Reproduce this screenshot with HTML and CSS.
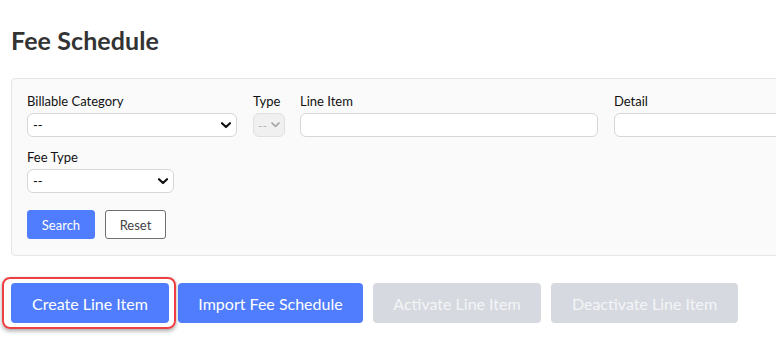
FILE: index.html
```html
<!DOCTYPE html>
<html>
<head>
<meta charset="utf-8">
<link rel="stylesheet" href="styles.css">
</head>
<body>
<div class="page">
  <h1 class="title">Fee Schedule</h1>
  <div class="panel">
    <div class="row">
      <div class="field f-cat">
        <label class="lbl">Billable Category</label>
        <div class="select"><span>--</span><svg class="chev" viewBox="0 0 10 7" width="10" height="7"><path d="M1 1.2 L5 5 L9 1.2" fill="none" stroke="#111" stroke-width="2.2" stroke-linecap="round" stroke-linejoin="round"/></svg></div>
      </div>
      <div class="field f-type">
        <label class="lbl">Type</label>
        <div class="select disabled"><span>--</span><svg class="chev" viewBox="0 0 10 7" width="9" height="6"><path d="M1 1.2 L5 5 L9 1.2" fill="none" stroke="#a6a6a6" stroke-width="2" stroke-linecap="round" stroke-linejoin="round"/></svg></div>
      </div>
      <div class="field f-line">
        <label class="lbl">Line Item</label>
        <div class="input"></div>
      </div>
      <div class="field f-detail">
        <label class="lbl">Detail</label>
        <div class="input"></div>
      </div>
    </div>
    <div class="row row2">
      <div class="field f-fee">
        <label class="lbl">Fee Type</label>
        <div class="select"><span>--</span><svg class="chev" viewBox="0 0 10 7" width="10" height="7"><path d="M1 1.2 L5 5 L9 1.2" fill="none" stroke="#111" stroke-width="2.2" stroke-linecap="round" stroke-linejoin="round"/></svg></div>
      </div>
    </div>
    <div class="actions">
      <button class="btn-search">Search</button>
      <button class="btn-reset">Reset</button>
    </div>
  </div>
  <div class="toolbar">
    <button class="big primary">Create Line Item</button>
    <button class="big primary imp">Import Fee Schedule</button>
    <button class="big off act">Activate Line Item</button>
    <button class="big off deact">Deactivate Line Item</button>
    <div class="highlight"></div>
  </div>
</div>
</body>
</html>
```
FILE: styles.css
```css
html, body {
  margin: 0;
  padding: 0;
  background: #fff;
  overflow: hidden;
}
body {
  font-family: Lato, "Liberation Sans", sans-serif;
  color: #222;
  width: 776px;
  height: 350px;
}
.page {
  padding-left: 11px;
}
.title {
  margin: 0;
  padding-top: 26px;
  font-size: 25px;
  line-height: 28px;
  font-weight: 700;
  color: #333;
  letter-spacing: 0.1px;
}
.panel {
  margin-top: 24px;
  width: 1000px;
  box-sizing: border-box;
  background: #fafafa;
  border: 1px solid #e6e6e6;
  border-radius: 4px;
  padding: 13px 15px 16px 15px;
}
.row {
  display: flex;
}
.row2 {
  margin-top: 11px;
}
.field {
  display: flex;
  flex-direction: column;
  flex-shrink: 0;
}
.lbl {
  font-size: 13px;
  line-height: 18px;
  color: #111;
  margin-bottom: 3px;
}
.f-cat { width: 210px; margin-right: 16px; }
.f-type { width: 32px; margin-right: 15px; }
.f-line { width: 298px; margin-right: 16px; }
.f-detail { width: 298px; }
.f-fee { width: 147px; }
.select, .input {
  box-sizing: border-box;
  height: 24px;
  border: 1px solid #d6d6d6;
  border-radius: 6px;
  background: #fff;
  display: flex;
  align-items: center;
  justify-content: space-between;
  padding: 0 4px 0 5px;
  font-size: 13px;
  color: #111;
}
.select span {
  line-height: 1;
  margin-top: 1px;
}
.chev {
  display: block;
  margin-right: 1px;
}
.select.disabled {
  background: #f0f0f0;
  border-color: #e0e0e0;
  color: #b0b0b0;
  padding: 0 3px 0 4px;
  font-size: 12px;
}
.actions {
  display: flex;
  gap: 10px;
  margin-top: 17px;
}
.actions button {
  box-sizing: border-box;
  height: 29px;
  font-family: Lato, "Liberation Sans", sans-serif;
  font-size: 13px;
  border-radius: 3px;
  padding: 0;
}
.btn-search {
  width: 68px;
  background: #4f7dfd;
  border: 1px solid #4f7dfd;
  color: #fff;
}
.btn-reset {
  width: 61px;
  background: #fff;
  border: 1px solid #6f6f6f;
  color: #444;
}
.toolbar {
  position: relative;
  display: flex;
  gap: 9px;
  margin-top: 27px;
}
.big {
  box-sizing: border-box;
  height: 40px;
  border: none;
  border-radius: 4px;
  font-family: Lato, "Liberation Sans", sans-serif;
  font-size: 16px;
  padding: 0;
  color: #fff;
  flex-shrink: 0;
}
.primary { background: #4f7dfd; }
.off { background: #d6d9df; color: #f4f5f7; }
.toolbar .big:nth-child(1) { width: 158px; }
.imp { width: 185px; }
.act { width: 168px; margin-left: 1px; }
.deact { width: 187px; margin-left: 1px; }
.highlight {
  position: absolute;
  left: -9px;
  top: -6px;
  width: 174px;
  height: 52px;
  box-sizing: border-box;
  border: 2.5px solid #ee3f43;
  border-radius: 8px;
  box-shadow: 0 2px 4px rgba(0,0,0,0.35);
  pointer-events: none;
}
```
